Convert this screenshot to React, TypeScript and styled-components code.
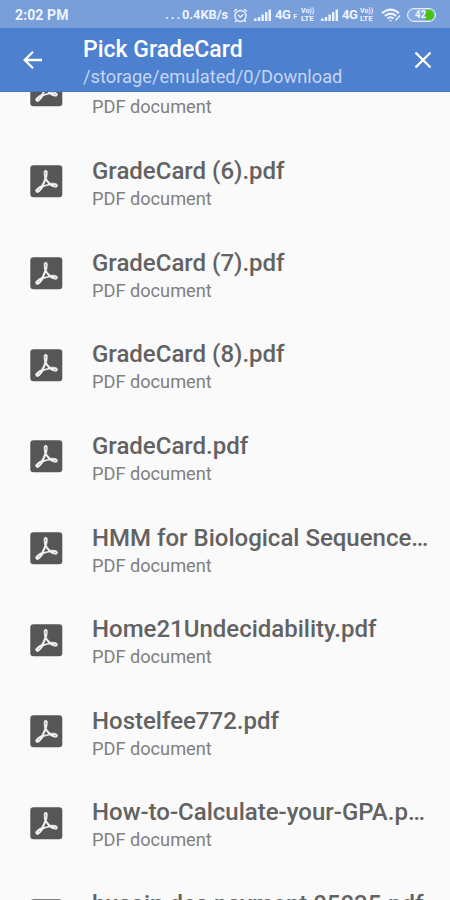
import React from "react";
import styled, { createGlobalStyle } from "styled-components";

const GlobalStyle = createGlobalStyle`
  * { box-sizing: border-box; }
  body { margin: 0; background: #fafafa; font-family: Roboto, "Liberation Sans", sans-serif; }
`;

const Screen = styled.div`
  width: 450px;
  height: 900px;
  display: flex;
  flex-direction: column;
  overflow: hidden;
  background: #fafafa;
`;

const StatusBar = styled.div`
  flex: none;
  height: 28px;
  display: flex;
  align-items: center;
  justify-content: space-between;
  padding: 2px 14px 0 15px;
  background: #789fda;
  color: #eef4ff;
`;

const Clock = styled.span`
  font-size: 14px;
  font-weight: 700;
  line-height: 16px;
  letter-spacing: 0.1px;
`;

const StatusIcons = styled.div`
  display: flex;
  align-items: center;
  height: 18px;
`;

const Speed = styled.span`
  display: flex;
  align-items: center;
  width: 64px;
  margin-right: 4px;
  font-size: 12.8px;
  font-weight: 700;
  line-height: 16px;
  white-space: nowrap;
`;

const Dots = styled.span`
  width: 17px;
  letter-spacing: 2px;
`;

const Network = styled.span<{ $width: number }>`
  display: flex;
  align-items: baseline;
  width: ${(p) => p.$width}px;
  margin-left: 3px;
  font-size: 13px;
  font-weight: 700;
  line-height: 16px;
  letter-spacing: -0.5px;
  white-space: nowrap;
  small { font-size: 7px; line-height: 8px; margin-left: 3px; }
`;

const Volte = styled.span`
  display: flex;
  flex-direction: column;
  width: 15px;
  font-size: 7px;
  font-weight: 700;
  line-height: 7px;
  white-space: nowrap;
  span:last-child { font-size: 8px; letter-spacing: -0.1px; }
`;

const Glyph = styled.svg<{ $gap?: number }>`
  display: block;
  flex: none;
  margin-left: ${(p) => p.$gap ?? 0}px;
`;

const Battery = styled.div`
  display: flex;
  align-items: center;
  justify-content: center;
  width: 29px;
  height: 14px;
  margin-left: 6px;
  padding: 0 2px 0 0;
  border: 1.5px solid #e9f1ff;
  border-radius: 7px;
  background: linear-gradient(90deg, #86a9df 62%, #43c512 62%);
  box-shadow: inset 0 0 0 1px #9dbbe8;
  font-size: 10px;
  font-weight: 700;
  line-height: 10px;
`;

const Header = styled.header`
  flex: none;
  height: 64px;
  display: flex;
  align-items: center;
  padding: 0 15px 0 20px;
  background: #4d80ce;
  border-bottom: 1px solid #4476c4;
  color: #fff;
`;

const IconButton = styled.button`
  flex: none;
  display: flex;
  padding: 0;
  border: 0;
  background: none;
  color: #fff;
`;

const Heading = styled.div`
  flex: 1;
  min-width: 0;
  margin-left: 38px;
  padding-top: 5px;
`;

const Title = styled.h1`
  margin: 0;
  font-size: 23px;
  font-weight: 500;
  line-height: 28px;
`;

const Path = styled.div`
  font-size: 18.3px;
  line-height: 25px;
  color: #c4d6f3;
`;

const ListArea = styled.main`
  flex: 1;
  min-height: 0;
  overflow: hidden;
`;

const List = styled.ul`
  list-style: none;
  margin: -47.5px 0 0;
  padding: 0;
`;

const Row = styled.li`
  display: flex;
  align-items: center;
  height: 91.65px;
  padding: 0 20px 0 30px;
`;

const FileText = styled.div`
  flex: 1;
  min-width: 0;
  margin-left: 29px;
  padding-top: 4px;
`;

const FileName = styled.div`
  height: 30px;
  font-size: 24px;
  font-weight: 500;
  line-height: 30px;
  color: #626262;
  white-space: nowrap;
`;

const FileType = styled.div`
  height: 26px;
  font-size: 18.2px;
  line-height: 26px;
  color: #808080;
`;

const SignalIcon = () => (
  <Glyph width="18" height="12" viewBox="0 0 18 12" fill="#eef4ff">
    <path d="M0 9.5h2.6V12H0zM3.8 8h2.4v4H3.8zM7.4 5.5h2.4V12H7.4zM11 3h2.4v9H11zM14.6 0.5H17V12h-2.4z" />
  </Glyph>
);

const AlarmIcon = () => (
  <Glyph width="15" height="15" viewBox="0 0 15 15" fill="none" stroke="#eaf2ff" strokeWidth="1.4">
    <circle cx="7.5" cy="8" r="5.5" />
    <path d="M1 3.6 3.8 1M14 3.6 11.2 1M5 7l2.5 2L10.2 6.4M3.6 12.2 2.2 14M11.4 12.2l1.4 1.8" />
  </Glyph>
);

const WifiIcon = () => (
  <Glyph $gap={6} width="20" height="14" viewBox="0 0 20 14" fill="none" stroke="#eef4ff" strokeWidth="2">
    <path d="M1 5.2Q9.5-2 18 5.2M3.8 8Q9.5 3.2 15.2 8M6.5 10.6Q9.5 8 12.5 10.6" />
    <path d="M8 12h3l-1.5 1.8z" fill="#eef4ff" stroke="none" />
    <path d="M14.5 12.5 19 7.5" strokeWidth="1.3" />
  </Glyph>
);

const BackIcon = () => (
  <Glyph width="25" height="24" viewBox="0 0 25 24" fill="none" stroke="currentColor" strokeWidth="2.3">
    <path d="M22 12H5M13 3.7 4.7 12l8.3 8.3" />
  </Glyph>
);

const CloseIcon = () => (
  <Glyph width="24" height="24" viewBox="0 0 24 24" fill="none" stroke="currentColor" strokeWidth="2.3">
    <path d="m4.5 4.5 15 15M19.5 4.5l-15 15" />
  </Glyph>
);

const PdfIcon = () => (
  <Glyph width="33" height="33" viewBox="0 0 33 33">
    <rect x="0.3" y="0.3" width="32" height="32" rx="3.2" fill="#565656" />
    <path
      d="M14.1 7c0-2.2 3.2-2.2 3.2.1 0 2.4-.3 4.5-.9 6.5 1.1 2 2.5 3.5 4.2 4.7 2.1-.2 4.4-.1 5.8.6 1.9 1 1.2 3.5-1 3.3-2-.2-4-1-5.7-2.3-2.2.4-4.4 1-6.4 1.8-1.4 2.3-3.2 4.8-4.9 5.6-2 .9-3.6-1.3-2.3-2.9 1.3-1.5 3.2-2.8 5.5-3.8 1.4-2.5 2.4-4.8 3.1-7-.4-2.1-.6-4.4-.6-6.6z"
      fill="#f4f4f4"
      stroke="#f4f4f4"
      strokeWidth="0.7"
    />
    <path d="m15.9 15.7-2 4.3 4.5-1.1c-1-1-1.8-2-2.5-3.2z" fill="#565656" />
    <path d="M15.7 7.2v2M24.5 20.4l1 .2M8.6 25l1-.9" stroke="#a0a0a0" strokeWidth="0.9" strokeLinecap="round" />
  </Glyph>
);

const files = [
  "",
  "GradeCard (6).pdf",
  "GradeCard (7).pdf",
  "GradeCard (8).pdf",
  "GradeCard.pdf",
  "HMM for Biological Sequence…",
  "Home21Undecidability.pdf",
  "Hostelfee772.pdf",
  "How-to-Calculate-your-GPA.p…",
  "husain des payment 05035.pdf",
];

export default function App() {
  return (
    <Screen>
      <GlobalStyle />
      <StatusBar>
        <Clock>2:02 PM</Clock>
        <StatusIcons>
          <Speed><Dots>...</Dots>0.4KB/s</Speed>
          <AlarmIcon />
          <Glyph width="6" height="1" />
          <SignalIcon />
          <Network $width={26}>4G<small>F</small></Network>
          <Volte><span>Vo))</span><span>LTE</span></Volte>
          <Glyph width="5" height="1" />
          <SignalIcon />
          <Network $width={18}>4G</Network>
          <Volte><span>Vo))</span><span>LTE</span></Volte>
          <WifiIcon />
          <Battery>42</Battery>
        </StatusIcons>
      </StatusBar>
      <Header>
        <IconButton aria-label="Back"><BackIcon /></IconButton>
        <Heading>
          <Title>Pick GradeCard</Title>
          <Path>/storage/emulated/0/Download</Path>
        </Heading>
        <IconButton aria-label="Close"><CloseIcon /></IconButton>
      </Header>
      <ListArea>
        <List>
          {files.map((name, index) => (
            <Row key={index}>
              <PdfIcon />
              <FileText>
                <FileName>{name}</FileName>
                <FileType>{index < files.length - 1 ? "PDF document" : null}</FileType>
              </FileText>
            </Row>
          ))}
        </List>
      </ListArea>
    </Screen>
  );
}
